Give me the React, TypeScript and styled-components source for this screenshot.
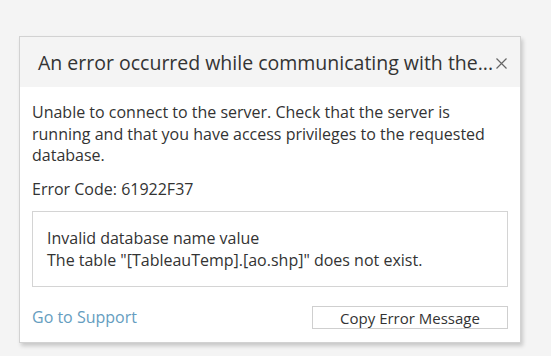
import React from 'react';
import styled, { createGlobalStyle } from 'styled-components';

const GlobalStyle = createGlobalStyle`
  body {
    margin: 0;
    background: #f4f4f4;
    font-family: 'Open Sans', Lato, sans-serif;
  }
`;

const Page = styled.div`
  padding: 36px 0 0 19px;
  width: 551px;
  height: 356px;
  box-sizing: border-box;
`;

const Dialog = styled.div`
  width: 502px;
  background: #fff;
  border: 1px solid #d2d2d2;
  box-sizing: border-box;
  box-shadow: 2px 3px 4px rgba(0, 0, 0, 0.18);
`;

const Header = styled.div`
  height: 50px;
  background: #f4f4f4;
  display: flex;
  align-items: center;
  padding: 0 12px 0 18px;
  box-sizing: border-box;
`;

const Title = styled.div`
  font-size: 19.5px;
  color: #333;
  white-space: nowrap;
`;

const Close = styled.button`
  border: 0;
  background: none;
  padding: 0;
  margin: 2px 0 0 3px;
  width: 11px;
  height: 11px;
  display: flex;
  cursor: pointer;
`;

const Body = styled.div`
  padding: 15px 12px 13px 12px;
  color: #333;
  font-size: 16px;
  line-height: 21.5px;
`;

const Text = styled.p<{ $gap?: number }>`
  margin: 0 0 ${(p) => p.$gap ?? 0}px 0;
`;

const DetailsBox = styled.div`
  border: 1px solid #d4d4d4;
  padding: 16px 14px 15px 14px;
`;

const Footer = styled.div`
  display: flex;
  justify-content: space-between;
  align-items: center;
  margin-top: 19px;
`;

const SupportLink = styled.a`
  color: #659dc0;
  text-decoration: none;
  font-size: 16px;
`;

const CopyButton = styled.button`
  width: 196px;
  height: 23px;
  background: #fff;
  border: 1px solid #cfcfcf;
  font-family: inherit;
  font-size: 15px;
  color: #333;
  padding: 0;
`;

const App: React.FC = () => {
  return (
    <>
      <GlobalStyle />
      <Page>
        <Dialog>
          <Header>
            <Title>An error occurred while communicating with the...</Title>
            <Close aria-label="close">
              <svg width="11" height="11" viewBox="0 0 11 11">
                <path d="M0.5 0.5L10.5 10.5M10.5 0.5L0.5 10.5" stroke="#666" strokeWidth="1.2" />
              </svg>
            </Close>
          </Header>
          <Body>
            <Text $gap={12}>
              Unable to connect to the server. Check that the server is running and that you have access privileges to the requested database.
            </Text>
            <Text $gap={11}>Error Code: 61922F37</Text>
            <DetailsBox>
              <div>Invalid database name value</div>
              <div>The table "[TableauTemp].[ao.shp]" does not exist.</div>
            </DetailsBox>
            <Footer>
              <SupportLink href="#">Go to Support</SupportLink>
              <CopyButton>Copy Error Message</CopyButton>
            </Footer>
          </Body>
        </Dialog>
      </Page>
    </>
  );
};

export default App;
